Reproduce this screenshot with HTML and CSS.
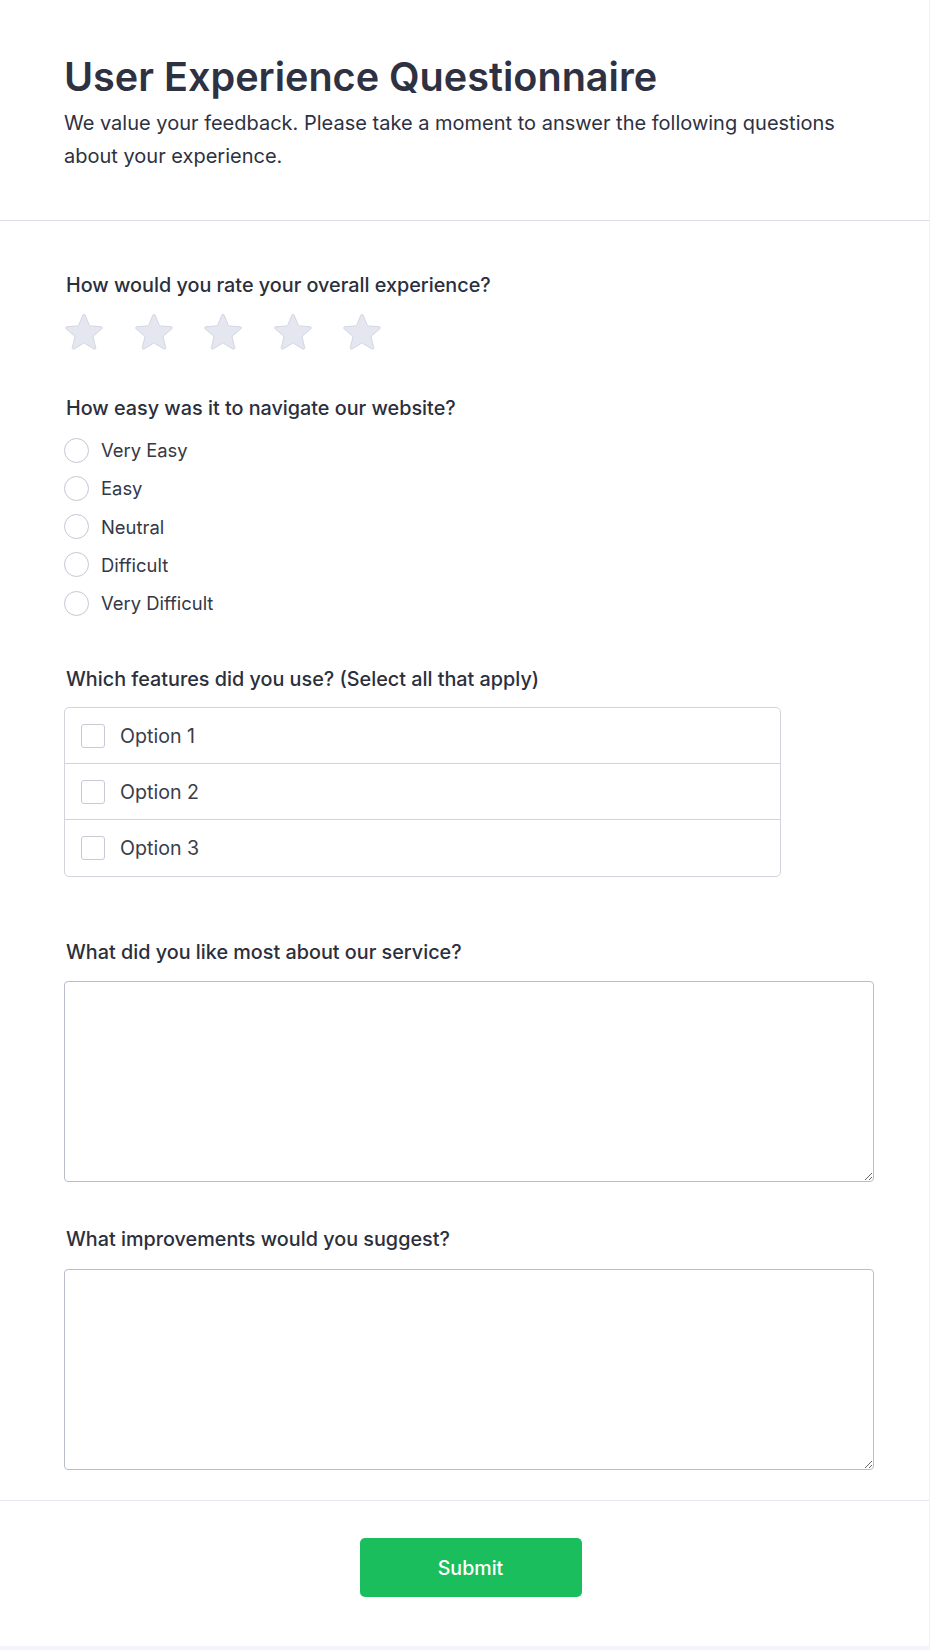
FILE: index.html
```html
<!DOCTYPE html>
<html lang="en">
<head>
<meta charset="utf-8">
<title>User Experience Questionnaire</title>
<link rel="stylesheet" href="styles.css">
</head>
<body>
<div class="card">
  <header class="header">
    <h1 class="title">User Experience Questionnaire</h1>
    <p class="subtitle">We value your feedback. Please take a moment to answer the following questions about your experience.</p>
  </header>
  <form class="form">
    <section class="question q-rating">
      <p class="label">How would you rate your overall experience?</p>
      <div class="stars">
        <svg class="star" viewBox="0 0 24 24"><path d="M11.48 3.499a.562.562 0 011.04 0l2.125 5.111a.563.563 0 00.475.345l5.518.442c.499.04.701.663.321.988l-4.204 3.602a.563.563 0 00-.182.557l1.285 5.385a.562.562 0 01-.84.61l-4.725-2.885a.563.563 0 00-.586 0L6.982 20.54a.562.562 0 01-.84-.61l1.285-5.386a.562.562 0 00-.182-.557l-4.204-3.602a.563.563 0 01.321-.988l5.518-.442a.563.563 0 00.475-.345L11.48 3.5z"/></svg>
        <svg class="star" viewBox="0 0 24 24"><path d="M11.48 3.499a.562.562 0 011.04 0l2.125 5.111a.563.563 0 00.475.345l5.518.442c.499.04.701.663.321.988l-4.204 3.602a.563.563 0 00-.182.557l1.285 5.385a.562.562 0 01-.84.61l-4.725-2.885a.563.563 0 00-.586 0L6.982 20.54a.562.562 0 01-.84-.61l1.285-5.386a.562.562 0 00-.182-.557l-4.204-3.602a.563.563 0 01.321-.988l5.518-.442a.563.563 0 00.475-.345L11.48 3.5z"/></svg>
        <svg class="star" viewBox="0 0 24 24"><path d="M11.48 3.499a.562.562 0 011.04 0l2.125 5.111a.563.563 0 00.475.345l5.518.442c.499.04.701.663.321.988l-4.204 3.602a.563.563 0 00-.182.557l1.285 5.385a.562.562 0 01-.84.61l-4.725-2.885a.563.563 0 00-.586 0L6.982 20.54a.562.562 0 01-.84-.61l1.285-5.386a.562.562 0 00-.182-.557l-4.204-3.602a.563.563 0 01.321-.988l5.518-.442a.563.563 0 00.475-.345L11.48 3.5z"/></svg>
        <svg class="star" viewBox="0 0 24 24"><path d="M11.48 3.499a.562.562 0 011.04 0l2.125 5.111a.563.563 0 00.475.345l5.518.442c.499.04.701.663.321.988l-4.204 3.602a.563.563 0 00-.182.557l1.285 5.385a.562.562 0 01-.84.61l-4.725-2.885a.563.563 0 00-.586 0L6.982 20.54a.562.562 0 01-.84-.61l1.285-5.386a.562.562 0 00-.182-.557l-4.204-3.602a.563.563 0 01.321-.988l5.518-.442a.563.563 0 00.475-.345L11.48 3.5z"/></svg>
        <svg class="star" viewBox="0 0 24 24"><path d="M11.48 3.499a.562.562 0 011.04 0l2.125 5.111a.563.563 0 00.475.345l5.518.442c.499.04.701.663.321.988l-4.204 3.602a.563.563 0 00-.182.557l1.285 5.385a.562.562 0 01-.84.61l-4.725-2.885a.563.563 0 00-.586 0L6.982 20.54a.562.562 0 01-.84-.61l1.285-5.386a.562.562 0 00-.182-.557l-4.204-3.602a.563.563 0 01.321-.988l5.518-.442a.563.563 0 00.475-.345L11.48 3.5z"/></svg>
      </div>
    </section>

    <section class="question q-radio">
      <p class="label">How easy was it to navigate our website?</p>
      <div class="radios">
        <label class="radio-row"><input type="radio" name="nav" class="radio"><span>Very Easy</span></label>
        <label class="radio-row"><input type="radio" name="nav" class="radio"><span>Easy</span></label>
        <label class="radio-row"><input type="radio" name="nav" class="radio"><span>Neutral</span></label>
        <label class="radio-row"><input type="radio" name="nav" class="radio"><span>Difficult</span></label>
        <label class="radio-row"><input type="radio" name="nav" class="radio"><span>Very Difficult</span></label>
      </div>
    </section>

    <section class="question q-check">
      <p class="label">Which features did you use? (Select all that apply)</p>
      <div class="checklist">
        <label class="check-row"><input type="checkbox" class="checkbox"><span>Option 1</span></label>
        <label class="check-row"><input type="checkbox" class="checkbox"><span>Option 2</span></label>
        <label class="check-row"><input type="checkbox" class="checkbox"><span>Option 3</span></label>
      </div>
    </section>

    <section class="question q-text">
      <p class="label">What did you like most about our service?</p>
      <textarea class="textarea"></textarea>
    </section>

    <section class="question q-text q-last">
      <p class="label">What improvements would you suggest?</p>
      <textarea class="textarea"></textarea>
    </section>
  </form>
  <footer class="footer">
    <button type="button" class="submit">Submit</button>
  </footer>
</div>
</body>
</html>
```

FILE: styles.css
```css
* { box-sizing: border-box; }

html, body {
  margin: 0;
  padding: 0;
}

body {
  background: #f4f4fd;
  font-family: "Inter", "Noto Sans", "Liberation Sans", sans-serif;
  color: #2d3142;
}

.card {
  width: 930px;
  height: 1646px;
  background: #ffffff;
  border-right: 1px solid #f0f0f5;
}

.header {
  padding: 57px 64px 48px 64px;
  border-bottom: 1px solid #dcdde5;
  background: #ffffff;
}

.title {
  margin: 0;
  font-size: 39.6px;
  line-height: 40px;
  font-weight: 600;
  color: #2e3141;
}

.subtitle {
  margin: 10px 0 0 0;
  font-size: 20px;
  line-height: 32.5px;
  color: #2e3141;
  max-width: 802px;
}

.form {
  padding: 50px 56px 30px 64px;
}

.label {
  margin: 0;
  padding-left: 2px;
  font-size: 19.8px;
  line-height: 28px;
  font-weight: 500;
  color: #2b2f3c;
}

.q-rating .label { margin-bottom: 9px; }

.stars {
  display: flex;
  gap: 21.5px;
  margin-left: -4px;
}

.star {
  width: 48px;
  height: 48px;
  fill: #e4e6f0;
  stroke: #d3d6e2;
  stroke-width: 0.5;
  stroke-linejoin: round;
}

.q-rating { margin-bottom: 38px; }

.q-radio .label { margin-bottom: 14px; }

.radios {
  display: flex;
  flex-direction: column;
  gap: 10.3px;
}

.radio-row {
  display: flex;
  align-items: center;
  height: 28px;
  font-size: 18.4px;
  color: #353846;
}

.radio {
  appearance: none;
  -webkit-appearance: none;
  width: 25px;
  height: 25px;
  margin: 0 12px 0 0;
  border: 1.5px solid #c5c8d4;
  border-radius: 50%;
  background: #fff;
}

.q-radio { margin-bottom: 48px; }

.q-check .label { margin-bottom: 14px; }

.checklist {
  width: 717px;
  border: 1px solid #d2d4dc;
  border-radius: 5px;
}

.check-row {
  display: flex;
  align-items: center;
  height: 56px;
  padding-left: 16px;
  font-size: 19.6px;
  color: #3a3d4a;
  border-bottom: 1px solid #d2d4dc;
}

.check-row:last-child { border-bottom: none; }

.checkbox {
  appearance: none;
  -webkit-appearance: none;
  width: 24px;
  height: 24px;
  margin: 0 15px 0 0;
  border: 1px solid #c8cbd6;
  border-radius: 3px;
  background: #fff;
}

.q-check { margin-bottom: 61px; }

.q-text .label { margin-bottom: 15px; }
.q-last .label { margin-bottom: 16px; }

.textarea {
  display: block;
  width: 810px;
  height: 201px;
  border: 1px solid #b9bdcb;
  border-radius: 4px;
  background: #fff;
  font-family: inherit;
  font-size: 16px;
  padding: 10px;
  margin: 0;
}

.q-text { margin-bottom: 43px; }
.q-last { margin-bottom: 0; }

.footer {
  border-top: 1px solid #e6e7ee;
  display: flex;
  justify-content: center;
  padding: 37px 52px 0 64px;
}

.submit {
  width: 222px;
  height: 59px;
  border: none;
  border-radius: 5px;
  background: #1bbe5d;
  color: #ffffff;
  font-family: inherit;
  font-size: 19.6px;
  font-weight: 500;
}
```
